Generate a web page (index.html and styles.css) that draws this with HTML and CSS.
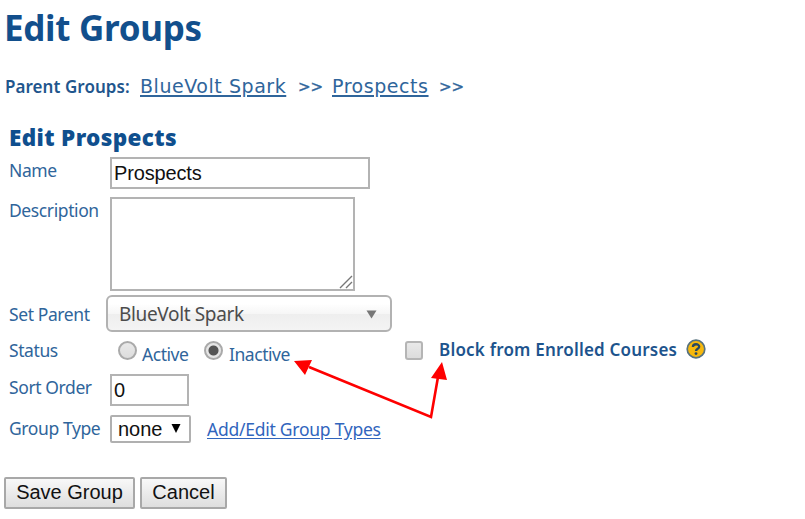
FILE: index.html
```html
<!DOCTYPE html>
<html lang="en">
<head>
    <meta charset="UTF-8">
    <meta name="viewport" content="width=device-width, initial-scale=1.0">
    <title>Edit Groups</title>
    <link rel="stylesheet" href="styles.css">
</head>
<body>
    <h1>Edit Groups</h1>

    <div class="breadcrumbs">
        <b>Parent Groups:</b>
        <a class="crumb-first" href="#">BlueVolt Spark</a>
        <span class="sep">&gt;&gt;</span>
        <a class="crumb-second" href="#">Prospects</a>
        <span class="sep">&gt;&gt;</span>
    </div>

    <form>
        <h2>Edit Prospects</h2>

        <div class="row row-name">
            <label class="label" for="name">Name</label>
            <input class="box" id="name" type="text" value="Prospects">
        </div>

        <div class="row row-description">
            <label class="label" for="description">Description</label>
            <div class="area">
                <textarea class="box" id="description"></textarea>
                <svg class="grip" width="14" height="14" viewBox="0 0 14 14">
                    <path d="M1 13L13 1M7 13L13 7" stroke="#777" stroke-width="1.4"/>
                </svg>
            </div>
        </div>

        <div class="row row-parent">
            <span class="label">Set Parent</span>
            <div class="dropdown">
                <span>BlueVolt Spark</span>
                <svg width="11" height="9" viewBox="0 0 11 9"><path d="M0.5 0.5h10L5.5 8.5z" fill="#777"/></svg>
            </div>
        </div>

        <div class="row row-status">
            <span class="label">Status</span>
            <span class="radio"></span>
            <span class="option active">Active</span>
            <span class="radio checked"></span>
            <span class="option inactive">Inactive</span>
            <span class="checkbox"></span>
            <b class="block">Block from Enrolled Courses</b>
            <svg class="help" width="20" height="20" viewBox="0 0 20 20">
                <circle cx="10" cy="10" r="8.8" fill="#f7b80c" stroke="#57727f" stroke-width="1.7"/>
                <path d="M6.9 8C6.9 4.4 13.2 4.4 13.2 7.7C13.2 9.8 10 9.6 10 12" fill="none" stroke="#294861" stroke-width="2.3"/>
                <circle cx="10" cy="14.6" r="1.4" fill="#294861"/>
            </svg>
        </div>

        <div class="row row-sort">
            <label class="label" for="sort">Sort Order</label>
            <input class="box" id="sort" type="text" value="0">
        </div>

        <div class="row row-type">
            <span class="label">Group Type</span>
            <div class="select">
                <span>none</span>
                <svg width="10" height="9" viewBox="0 0 10 9"><path d="M0.5 0h9L5 9z" fill="#000"/></svg>
            </div>
            <a class="types" href="#">Add/Edit Group Types</a>
        </div>

        <div class="buttons">
            <button class="save" type="button">Save Group</button>
            <button class="cancel" type="button">Cancel</button>
        </div>
    </form>

    <!-- Arrows linking the inactive status and the block option -->
    <svg class="arrows" width="160" height="64" viewBox="0 0 160 64">
        <path d="M16 8L138 58L145 18" fill="none" stroke="#fe0000" stroke-width="2.6"/>
        <path d="M1 2L19 1L12 16zM149 3L138 19L154 21z" fill="#fe0000"/>
    </svg>
</body>
</html>
```

FILE: styles.css
```css
* {
    box-sizing: border-box;
}

body {
    position: relative;
    height: 519px;
    margin: 0;
    overflow: hidden;
    background: #fff;
    color: #2f659b;
    font-family: "Noto Sans", sans-serif;
    font-size: 18px;
    white-space: nowrap;
}

h1 {
    height: 60px;
    margin: 0;
    padding-left: 4px;
    color: #124f8c;
    font-size: 35px;
    line-height: 56px;
    letter-spacing: -0.3px;
}

.breadcrumbs {
    display: flex;
    height: 67px;
    padding-left: 5px;
    line-height: 52px;
    font-family: "DejaVu Sans", sans-serif;
    font-size: 19px;
}

.breadcrumbs b {
    width: 135px;
    color: #1f568d;
    font-family: "Noto Sans", sans-serif;
    font-size: 17px;
    font-weight: 600;
    line-height: 54px;
    letter-spacing: 0.05px;
}

.breadcrumbs a {
    color: #2f659b;
    letter-spacing: 0.55px;
    text-decoration-thickness: 2px;
    text-underline-offset: 2px;
}

.crumb-first {
    width: 158px;
}

.crumb-second {
    width: 107px;
}

.sep {
    width: 34px;
    font-size: 15px;
    line-height: 54px;
    -webkit-text-stroke: 0.4px #2f659b;
}

h2 {
    height: 25px;
    margin: 0;
    padding-left: 9px;
    color: #0f4f8e;
    font-size: 22.5px;
    font-weight: 900;
    line-height: 22px;
    letter-spacing: 0.35px;
}

.row {
    display: flex;
    align-items: flex-start;
    padding-left: 9px;
}

.label {
    width: 101px;
    line-height: 26px;
    font-size: 17.5px;
    letter-spacing: -0.4px;
}

.box {
    border: 2px solid #b3b3b3;
    border-radius: 0;
    background: #fff;
    color: #111;
    font-family: "Liberation Sans", Arial, sans-serif;
    font-size: 20px;
    letter-spacing: -0.15px;
    padding: 0 2px;
    outline: none;
}

.row-name {
    height: 45px;
    padding-top: 5px;
}

#name {
    width: 260px;
    height: 32px;
}

.row-description {
    height: 98px;
}

.area {
    position: relative;
    width: 245px;
    height: 94px;
}

#description {
    display: block;
    width: 245px;
    height: 94px;
    resize: none;
}

.grip {
    position: absolute;
    right: 2px;
    bottom: 2px;
}

.row-parent {
    height: 42px;
}

.row-parent .label {
    width: 97px;
    padding-top: 6px;
}

.dropdown {
    display: flex;
    align-items: center;
    justify-content: space-between;
    width: 286px;
    height: 37px;
    padding: 1px 13px 0 11px;
    border: 2px solid #b2b2b2;
    border-radius: 6px;
    background: linear-gradient(#fff 20%, #f6f6f6 50%, #eee 52%, #f4f4f4 100%);
    color: #4c4c4c;
    font-size: 19px;
    letter-spacing: -0.35px;
}

.row-status {
    height: 37px;
}

.radio {
    width: 19px;
    height: 19px;
    margin: 4px 5px 0 8px;
    border: 2px solid #aaa;
    border-radius: 50%;
    background: linear-gradient(#e9e9e9, #ddd);
}

.checked {
    margin: 4px 6px 0 0;
    background: radial-gradient(circle, #555 0 4.5px, #e6e6e6 5.5px);
}

.option {
    padding-top: 4px;
    font-size: 17.5px;
    line-height: 26px;
    letter-spacing: -0.45px;
}

.active {
    width: 62px;
}

.inactive {
    width: 176px;
}

.checkbox {
    width: 18px;
    height: 19px;
    margin: 4px 16px 0 0;
    border: 2px solid #b5b5b5;
    border-radius: 3px;
    background: linear-gradient(#e9e9e9, #dcdcdc);
}

.block {
    width: 247px;
    color: #1d548d;
    font-size: 17px;
    font-weight: 600;
    line-height: 26px;
    letter-spacing: 0.2px;
}

.help {
    margin-top: 2px;
}

.row-sort {
    height: 41px;
}

#sort {
    width: 79px;
    height: 32px;
}

.select {
    display: flex;
    align-items: center;
    justify-content: space-between;
    width: 81px;
    height: 28px;
    padding: 0 8px 1px 6px;
    border: 2px solid #b0b0b0;
    border-radius: 2px;
    color: #111;
    font-family: "Liberation Sans", Arial, sans-serif;
    font-size: 20px;
    line-height: 24px;
}

.types {
    margin-left: 16px;
    color: #3165bd;
    font-size: 17.5px;
    line-height: 28px;
    letter-spacing: -0.25px;
    text-underline-offset: 2px;
}

.buttons {
    display: flex;
    gap: 5px;
    padding: 34px 0 0 4px;
}

button {
    height: 32px;
    padding: 0 0 1px;
    border: 2px solid #a8a8a8;
    border-radius: 2px;
    background: linear-gradient(#f8f8f8, #dedede);
    color: #111;
    font-family: "Liberation Sans", Arial, sans-serif;
    font-size: 20px;
}

.save {
    width: 131px;
}

.cancel {
    width: 87px;
}

.arrows {
    position: absolute;
    left: 293px;
    top: 359px;
}
```
